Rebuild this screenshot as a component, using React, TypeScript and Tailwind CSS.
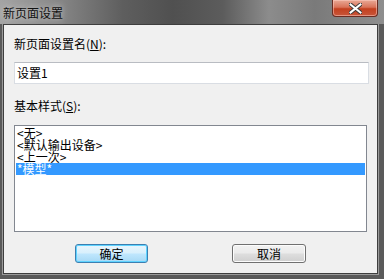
const font = "font-['SimSun','Noto_Sans_CJK_SC','Liberation_Sans',sans-serif]";

const items = ["<无>", "<默认输出设备>", "<上一次>", "*模型*"];

export default function App() {
  return (
    <div
      className={`w-[384px] h-[279px] flex flex-col bg-[#5a5a5a] text-[12px] leading-[14px] text-black ${font}`}>
      {/* title bar */}
      <div className="relative h-[24px] flex-none bg-[linear-gradient(90deg,#a4a4a4_0%,#8a8a8a_14%,#5e5e5e_32%,#505050_45%,#5c5c5c_58%,#8c8c8c_70%,#7a7a7a_82%,#8e8e8e_100%)]">
        <span className="absolute left-[3px] top-[6px] text-[12px] leading-[14px] text-[#111] [text-shadow:0_0_6px_#d8d8d8]">
          新页面设置
        </span>
        <button className="absolute left-[332px] top-0 w-[46px] h-[17px] rounded-b-[4px] border border-t-0 border-[#6a2c22] bg-[linear-gradient(180deg,#e9a996_0%,#d9735a_45%,#c3401f_55%,#c8563a_100%)] shadow-[inset_0_0_0_1px_rgba(255,210,200,0.5)] flex items-center justify-center">
          <svg width="13" height="11" viewBox="0 0 13 11">
            <path
              d="M1.5 1.5 L11.5 9.5 M11.5 1.5 L1.5 9.5"
              stroke="#3a3a3a"
              strokeWidth="4"
              strokeLinecap="square"
            />
            <path
              d="M1.5 1.5 L11.5 9.5 M11.5 1.5 L1.5 9.5"
              stroke="#ffffff"
              strokeWidth="2"
              strokeLinecap="square"
            />
          </svg>
        </button>
      </div>

      {/* client area */}
      <div className="flex-1 ml-[3px] mr-[6px] mb-[5px] bg-[#f0f0f0] border border-[#3e3e3e] shadow-[0_0_0_1px_#9a9a9a] flex flex-col pl-[10px] pt-[12px]">
        <div>
          新页面设置名(<span className="underline">N</span>):
        </div>
        <div className="mt-[11px] w-[355px] h-[22px] bg-white border border-[#d9dde3] border-t-[#b9bcc2] pl-[2px] flex items-center">
          设置1
        </div>
        <div className="mt-[15px]">
          基本样式(<span className="underline">S</span>):
        </div>
        <div className="mt-[12px] w-[353px] h-[107px] bg-white border border-[#828790] p-px">
          {items.map((item, i) => (
            <div
              key={item}
              className={`h-[12px] leading-[12px] pl-px ${i === 3 ? "bg-[#3399ff] text-white" : ""}`}>
              {item}
            </div>
          ))}
        </div>
        <div className="mt-[12px] flex">
          <button className="ml-[61px] w-[73px] h-[19px] rounded-[3px] border border-[#3c7fb1] bg-[linear-gradient(180deg,#eaf6fd_0%,#d9f0fc_45%,#bee6fd_55%,#a7d9f5_100%)] shadow-[inset_0_0_0_1px_#5fd3ff] flex items-center justify-center leading-[12px]">
            确定
          </button>
          <button className="ml-[84px] w-[74px] h-[19px] rounded-[3px] border border-[#707070] bg-[linear-gradient(180deg,#f2f2f2_0%,#ebebeb_45%,#dddddd_55%,#cfcfcf_100%)] shadow-[inset_0_0_0_1px_#fcfcfc] flex items-center justify-center leading-[12px]">
            取消
          </button>
        </div>
      </div>
    </div>
  );
}
